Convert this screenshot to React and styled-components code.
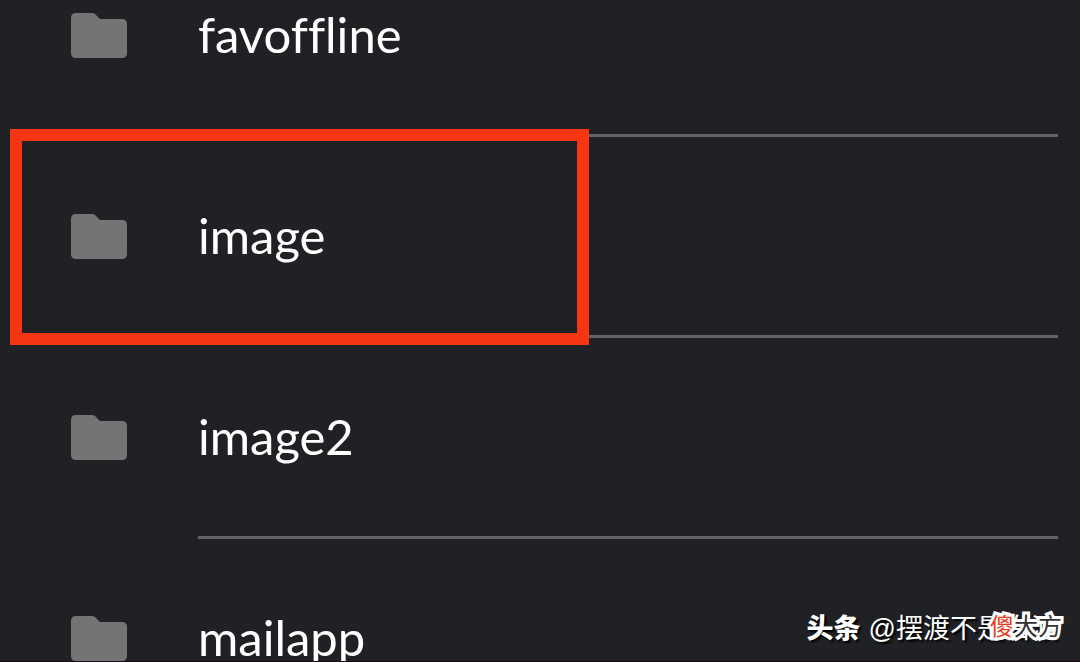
import React from "react";
import styled, { createGlobalStyle } from "styled-components";

const GlobalStyle = createGlobalStyle`
  * {
    box-sizing: border-box;
  }
  body {
    margin: 0;
    background-color: #202124;
  }
`;

const Screen = styled.main`
  position: relative;
  height: 100vh;
  overflow: hidden;
  background-color: #202124;
  border-bottom: 1px solid #180d17;
`;

const FolderList = styled.ul`
  margin: -64px 0 0;
  padding: 0;
  list-style: none;
`;

const Row = styled.li`
  position: relative;
  display: flex;
  align-items: stretch;
  gap: 71px;
  height: 201px;
  padding: 0 22px 0 71px;
`;

const FolderIcon = styled.svg`
  flex: none;
  align-self: center;
  width: 56px;
  height: 48px;
  fill: #747474;
`;

const FolderName = styled.span`
  flex: 1;
  display: flex;
  align-items: center;
  padding-bottom: 2px;
  border-bottom: 3px solid #626267;
  color: #fff;
  font-family: Lato, "Liberation Sans", sans-serif;
  font-size: 49px;
  line-height: 60px;
  font-variant-ligatures: none;
`;

const Highlight = styled.div`
  position: absolute;
  z-index: 1;
  top: -8px;
  bottom: -7px;
  left: 10px;
  right: 491px;
  border: 12px solid #f63512;
`;

const Watermark = styled.div`
  position: absolute;
  right: 22px;
  bottom: 14px;
  display: flex;
  align-items: baseline;
  gap: 8px;
  color: #fff;
  font-family: "Noto Sans CJK SC", sans-serif;
  font-size: 27px;
  line-height: 36px;
  white-space: nowrap;
  text-shadow: 2px 2px 2px #000;
`;

const Brand = styled.span`
  font-weight: 900;
`;

const Author = styled.span`
  font-family: "Liberation Sans", "Noto Sans CJK SC", sans-serif;
  font-weight: 400;
`;

const Stamp = styled.div`
  position: absolute;
  right: 18px;
  bottom: 18px;
  color: #333;
  font-family: "Noto Sans CJK SC", sans-serif;
  font-size: 24px;
  line-height: 36px;
  white-space: nowrap;
  paint-order: stroke fill;
  -webkit-text-stroke: 6px #fff;
`;

const StampAccent = styled.span`
  color: #e8401c;
`;

const folders = [
  { name: "favoffline" },
  { name: "image", selected: true },
  { name: "image2" },
  { name: "mailapp" },
];

const Folder = ({ name, selected }) => {
  return (
    <Row>
      <FolderIcon viewBox="0 0 56 48" aria-hidden="true">
        <path d="M5 0H21Q23 0 24 1L29 6H51Q56 6 56 11V40Q56 45 51 45H5Q0 45 0 40V5Q0 0 5 0Z" />
      </FolderIcon>
      <FolderName>{name}</FolderName>
      {selected && <Highlight />}
    </Row>
  );
};

const App = () => {
  return (
    <>
      <GlobalStyle />
      <Screen>
        <FolderList>
          {folders.map((folder) => (
            <Folder key={folder.name} {...folder} />
          ))}
        </FolderList>
        <Watermark>
          <Brand>头条</Brand>
          <Author>@摆渡不是白渡</Author>
        </Watermark>
        <Stamp>
          <StampAccent>傻</StampAccent>大方
        </Stamp>
      </Screen>
    </>
  );
};

export default App;
